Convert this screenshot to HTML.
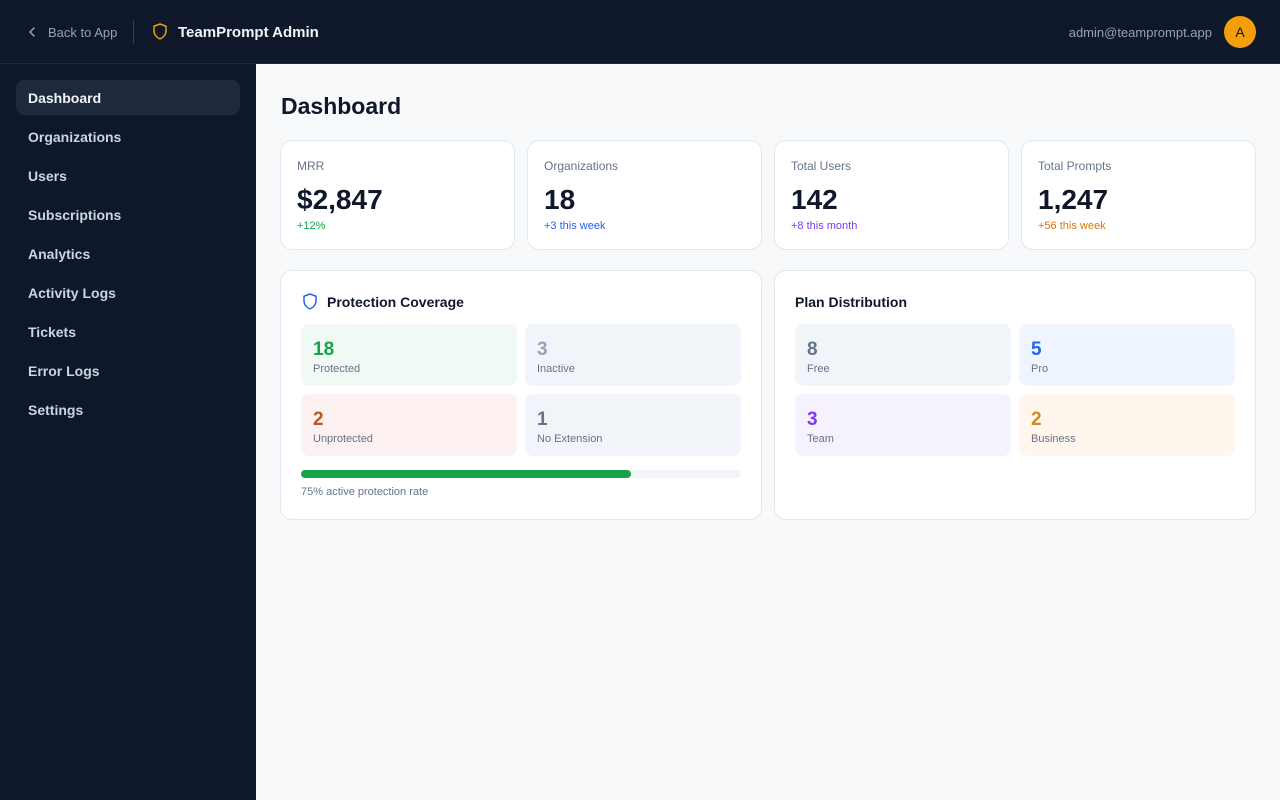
<!DOCTYPE html>
<html><head><meta charset="utf-8"><style>
*{box-sizing:border-box;margin:0;padding:0}
body{width:1280px;height:800px;font-family:"Liberation Sans",sans-serif;background:#f8f9fb;overflow:hidden;position:relative}
.top{position:absolute;left:0;top:0;width:1280px;height:64px;background:#0f172a;border-bottom:1px solid #1e293b}
.side{position:absolute;left:0;top:64px;width:256px;height:736px;background:#0f172a}
.nav{position:absolute;left:16px;width:224px;height:35px;border-radius:8px;color:#cbd5e1;font-size:14px;font-weight:bold;padding:0 12px;line-height:37px}
.nav.a{background:#1e293b;color:#f1f5f9}
.main{position:absolute;left:256px;top:64px;right:0;bottom:0}
h1{position:absolute;left:25px;top:29px;font-size:23px;color:#0f172a}
.card{position:absolute;background:#fff;border:1px solid #e2e8f0;border-radius:12px}
.lab{position:absolute;left:16px;top:18px;font-size:12px;color:#64748b}
.val{position:absolute;left:16px;top:43px;font-size:28px;font-weight:bold;color:#0f172a}
.sub{position:absolute;left:16px;top:79px;font-size:11px}
.box{position:absolute;width:216px;height:62px;border-radius:8px}
.box b{position:absolute;left:12px;top:15px;font-size:19px}
.box span{position:absolute;left:12px;top:39px;font-size:11px;color:#64748b}
.ct{position:absolute;top:23px;font-size:14px;font-weight:bold;color:#0f172a}
</style></head><body>
<div class="top">
<svg style="position:absolute;left:27px;top:26px" width="10" height="12" viewBox="0 0 10 12"><path d="M7 2L3 6l4 4" stroke="#94a3b8" stroke-width="1.5" fill="none" stroke-linecap="round"/></svg>
<div style="position:absolute;left:48px;top:25px;font-size:13px;color:#94a3b8">Back to App</div>
<div style="position:absolute;left:133px;top:20px;width:1px;height:24px;background:#334155"></div>
<svg style="position:absolute;left:151px;top:22px" width="18" height="19" viewBox="0 0 24 24"><path d="M12 2l8 3v6c0 5-3.5 9-8 11-4.5-2-8-6-8-11V5z" stroke="#f59e0b" stroke-width="2" fill="none" stroke-linejoin="round"/></svg>
<div style="position:absolute;left:178px;top:24px;font-size:15px;font-weight:bold;color:#f1f5f9">TeamPrompt Admin</div>
<div style="position:absolute;right:68px;top:25px;font-size:13px;color:#94a3b8">admin@teamprompt.app</div>
<div style="position:absolute;left:1224px;top:16px;width:32px;height:32px;border-radius:50%;background:#f59e0b;color:#0f172a;text-align:center;line-height:33px;font-size:14px">A</div>
</div>
<div class="side">
<div class="nav a" style="top:16px">Dashboard</div>
<div class="nav" style="top:55px">Organizations</div>
<div class="nav" style="top:94px">Users</div>
<div class="nav" style="top:133px">Subscriptions</div>
<div class="nav" style="top:172px">Analytics</div>
<div class="nav" style="top:211px">Activity Logs</div>
<div class="nav" style="top:250px">Tickets</div>
<div class="nav" style="top:289px">Error Logs</div>
<div class="nav" style="top:328px">Settings</div>
</div>
<div class="main">
<h1>Dashboard</h1>
<div class="card" style="left:24px;top:76px;width:235px;height:110px"><div class="lab">MRR</div><div class="val">$2,847</div><div class="sub" style="color:#16a34a">+12%</div></div>
<div class="card" style="left:271px;top:76px;width:235px;height:110px"><div class="lab">Organizations</div><div class="val">18</div><div class="sub" style="color:#2563eb">+3 this week</div></div>
<div class="card" style="left:518px;top:76px;width:235px;height:110px"><div class="lab">Total Users</div><div class="val">142</div><div class="sub" style="color:#7c3aed">+8 this month</div></div>
<div class="card" style="left:765px;top:76px;width:235px;height:110px"><div class="lab">Total Prompts</div><div class="val">1,247</div><div class="sub" style="color:#d97706">+56 this week</div></div>
<div class="card" style="left:24px;top:206px;width:482px;height:250px">
<svg style="position:absolute;left:20px;top:21px" width="18" height="19" viewBox="0 0 24 24"><path d="M12 2l8 3v6c0 5-3.5 9-8 11-4.5-2-8-6-8-11V5z" stroke="#2563eb" stroke-width="2" fill="none" stroke-linejoin="round"/></svg>
<div class="ct" style="left:46px">Protection Coverage</div>
<div class="box" style="left:20px;top:53px;background:#f0f9f4"><b style="color:#16a34a">18</b><span>Protected</span></div>
<div class="box" style="left:244px;top:53px;background:#f1f4f8"><b style="color:#94a3b8">3</b><span>Inactive</span></div>
<div class="box" style="left:20px;top:123px;background:#fcf1f0"><b style="color:#b45a29">2</b><span>Unprotected</span></div>
<div class="box" style="left:244px;top:123px;background:#f1f4f8"><b style="color:#64748b">1</b><span>No Extension</span></div>
<div style="position:absolute;left:20px;top:199px;width:440px;height:8px;border-radius:4px;background:#f1f5f9"><div style="width:330px;height:8px;border-radius:4px;background:#16a34a"></div></div>
<div style="position:absolute;left:20px;top:215px;font-size:11px;color:#64748b">75% active protection rate</div>
</div>
<div class="card" style="left:518px;top:206px;width:482px;height:250px">
<div class="ct" style="left:20px">Plan Distribution</div>
<div class="box" style="left:20px;top:53px;background:#f1f4f8"><b style="color:#64748b">8</b><span>Free</span></div>
<div class="box" style="left:244px;top:53px;background:#eff5ff"><b style="color:#2563eb">5</b><span>Pro</span></div>
<div class="box" style="left:20px;top:123px;background:#f5f2fe"><b style="color:#7c3aed">3</b><span>Team</span></div>
<div class="box" style="left:244px;top:123px;background:#fff6ee"><b style="color:#d08a2c">2</b><span>Business</span></div>
</div>
</div>
</body></html>
